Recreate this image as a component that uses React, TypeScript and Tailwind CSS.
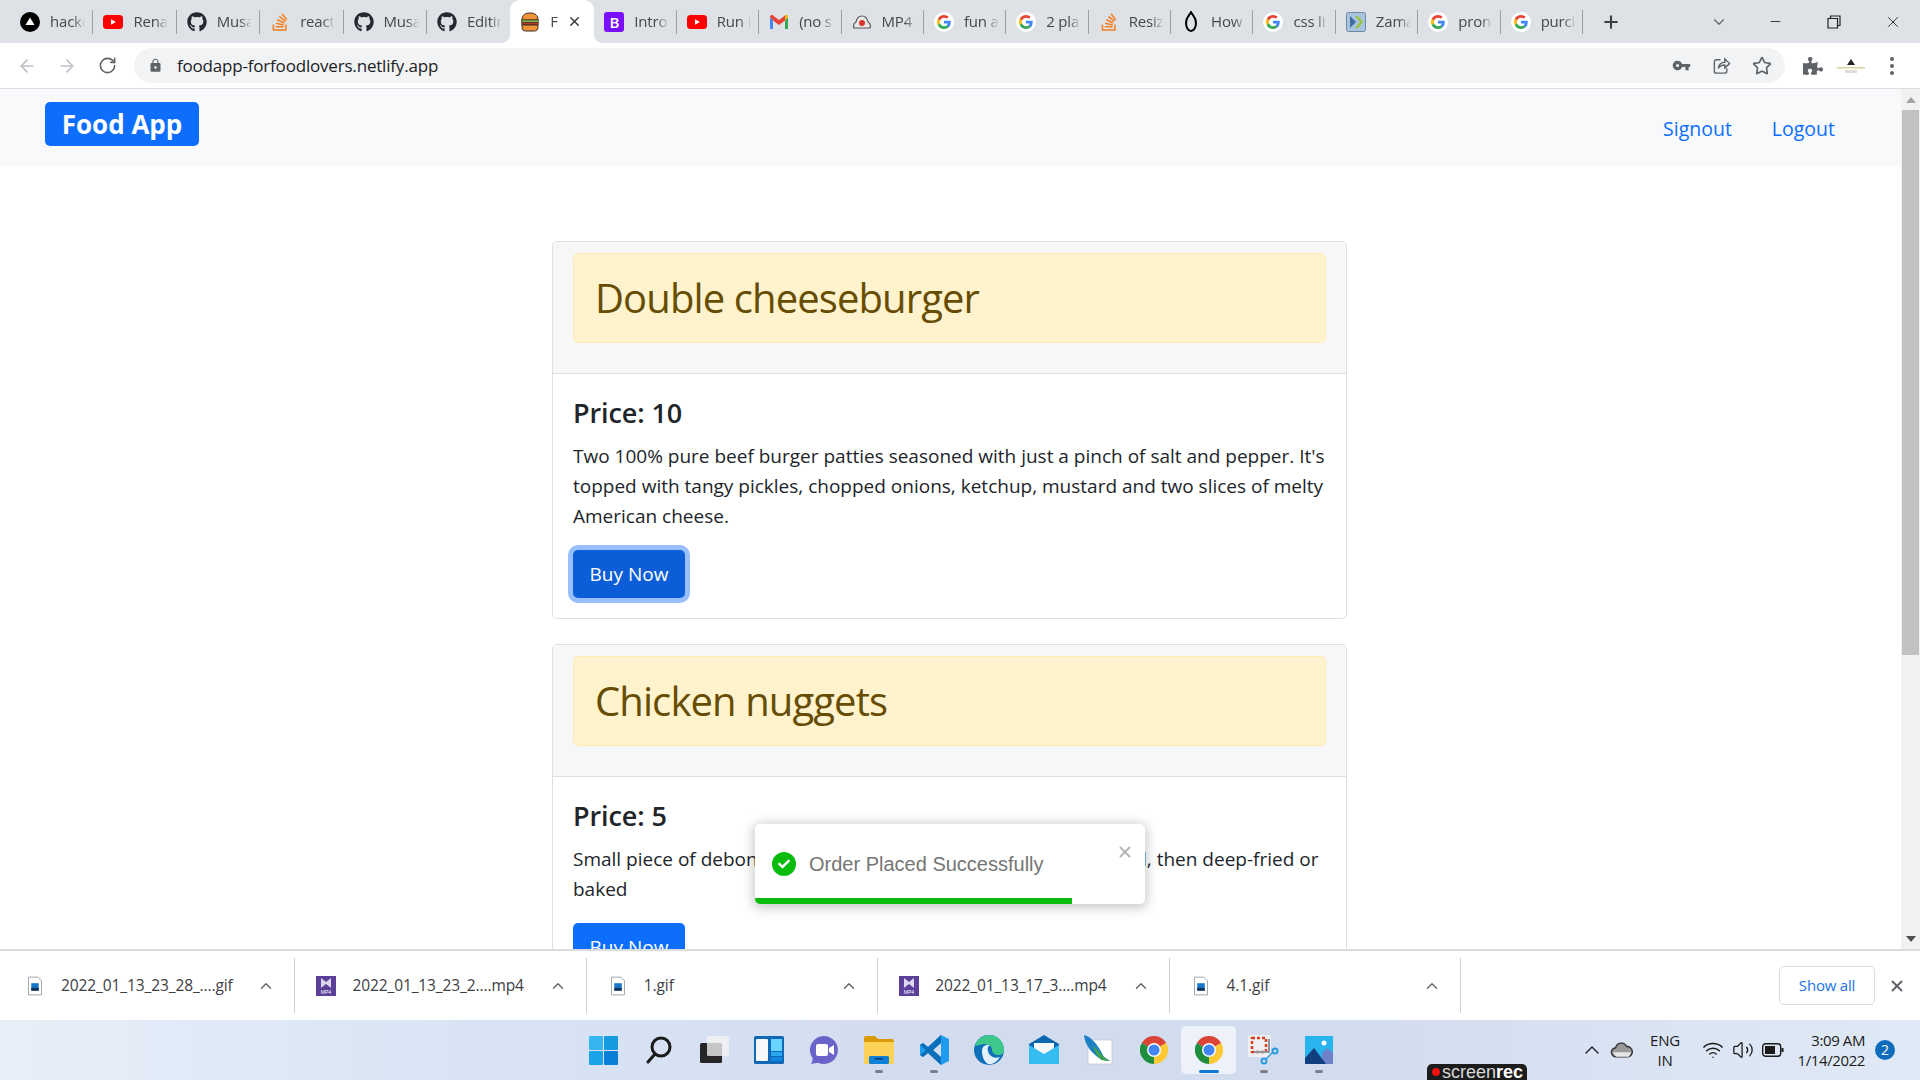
import { ArrowLeft, ArrowRight, ChevronDown, ChevronUp, Minus, Plus, RotateCw, Star, Volume2, Wifi, X } from "lucide-react";
import { FaCheck, FaGithub, FaPuzzlePiece, FaStackOverflow } from "react-icons/fa";
import { MdLock, MdVpnKey } from "react-icons/md";

function GoogleG() {
  return (
    <span className="w-5 h-5 rounded-full bg-white flex items-center justify-center">
      <svg viewBox="0 0 48 48" className="w-[14px] h-[14px]">
        <path fill="#EA4335" d="M24 9.5c3.54 0 6.71 1.22 9.21 3.6l6.85-6.85C35.9 2.38 30.47 0 24 0 14.62 0 6.51 5.38 2.56 13.22l7.98 6.19C12.43 13.72 17.74 9.5 24 9.5z" />
        <path fill="#4285F4" d="M46.98 24.55c0-1.57-.15-3.09-.38-4.55H24v9.02h12.94c-.58 2.96-2.26 5.48-4.78 7.18l7.73 6c4.51-4.18 7.09-10.36 7.09-17.65z" />
        <path fill="#FBBC05" d="M10.53 28.59c-.48-1.45-.76-2.99-.76-4.59s.27-3.14.76-4.59l-7.98-6.19C.92 16.46 0 20.12 0 24c0 3.88.92 7.54 2.56 10.78l7.97-6.19z" />
        <path fill="#34A853" d="M24 48c6.48 0 11.93-2.13 15.89-5.81l-7.73-6c-2.15 1.45-4.92 2.3-8.16 2.3-6.26 0-11.57-4.22-13.47-9.91l-7.98 6.19C6.51 42.62 14.62 48 24 48z" />
      </svg>
    </span>
  );
}

function Hacker() {
  return (
    <svg viewBox="0 0 20 20" className="w-5 h-5">
      <circle cx="10" cy="10" r="10" fill="#000" />
      <path d="M10 5.5 14.5 13h-9z" fill="#fff" />
    </svg>
  );
}

function Youtube() {
  return (
    <svg viewBox="0 0 20 20" className="w-5 h-5">
      <rect x="0" y="3" width="20" height="14" rx="3.5" fill="#f00" />
      <path d="M8 7.2 13 10l-5 2.8z" fill="#fff" />
    </svg>
  );
}

function Burger() {
  return (
    <svg viewBox="0 0 20 20" className="w-5 h-5">
      <path d="M2 8c0-5 3-7 8-7s8 2 8 7z" fill="#f0923a" stroke="#3a2a20" strokeWidth="1" />
      <rect x="1.5" y="8" width="17" height="2.5" fill="#7cb342" stroke="#3a2a20" strokeWidth=".6" />
      <rect x="1.5" y="10.5" width="17" height="2.5" rx="1" fill="#b3392c" stroke="#3a2a20" strokeWidth=".6" />
      <path d="M2 13h16v2.5c0 2-1.500 3.500-3.500 3.500h-9C3.500 19 2 17.500 2 15.500z" fill="#f0923a" stroke="#3a2a20" strokeWidth="1" />
    </svg>
  );
}

function Gmail() {
  return (
    <svg viewBox="0 0 20 20" className="w-5 h-5">
      <path d="M1 5v12h3V8.500z" fill="#4285f4" />
      <path d="M19 5v12h-3V8.500z" fill="#34a853" />
      <path d="M1 5c0-2 2-2.500 3-1.500L10 8l6-4.500c1-1 3-.5 3 1.500l-3 3.500-6 4.500-6-4.500z" fill="#ea4335" />
      <path d="M16 3.500c1-1 3-.5 3 1.500l-3 3.500z" fill="#fbbc04" />
    </svg>
  );
}

function CloudTab() {
  return (
    <svg viewBox="0 0 20 20" className="w-5 h-5">
      <path d="M2 16c-1-3 0-5 2-6 1-4 3-6 6-6s5 2 6 6c2 1 3 3 2 6z" fill="#e8e8e8" stroke="#555" strokeWidth="1.200" />
      <circle cx="10" cy="11" r="3" fill="#d9362b" />
    </svg>
  );
}

function Flame() {
  return (
    <svg viewBox="0 0 20 22" className="w-5 h-[22px]">
      <path d="M10 1c1 3 5 5 5 11 0 4-2 8-5 8s-5-4-5-8c0-6 4-8 5-11z" fill="none" stroke="#000" strokeWidth="2" />
    </svg>
  );
}

function Zamzar() {
  return (
    <svg viewBox="0 0 20 20" className="w-5 h-5">
      <rect x=".5" y=".5" width="19" height="19" rx="2" fill="#a9c4dd" stroke="#6a8aa8" />
      <path d="M4 4l6 6-6 6z" fill="#3f6ea5" />
      <path d="M9 4h3l5 6-5 6H9l5-6z" fill="#9bc53d" />
    </svg>
  );
}

function Bootstrap() {
  return <span className="w-5 h-5 rounded-[3px] bg-[#7a10f7] text-white text-[15px] leading-5 text-center font-semibold">B</span>;
}

function GifFile() {
  return (
    <svg viewBox="0 0 15 20" className="w-[14px] h-5">
      <path d="M.5.5h10l4 4v15H.5z" fill="#fff" stroke="#9aa0a6" />
      <rect x="3.500" y="7" width="8" height="8" fill="#1877c9" />
      <rect x="3.500" y="12" width="8" height="3" fill="#12315a" />
    </svg>
  );
}

function Mp4File() {
  return (
    <svg viewBox="0 0 20 20" className="w-5 h-5">
      <rect width="20" height="20" fill="#5b3f99" />
      <path d="M5 2l5 4 5-4v10l-5-4-5 4z" fill="#ddd6ee" />
      <text x="10" y="18" fontSize="5" fill="#fff" textAnchor="middle" fontFamily="Liberation Sans">MP4</text>
    </svg>
  );
}

function Chrome({ size = "w-7 h-7" }: { size?: string }) {
  return (
    <svg viewBox="0 0 48 48" className={size}>
      <path d="M24 24 3.200 12A24 24 0 0 1 44.800 12z" fill="#db4437" />
      <path d="M24 24 44.800 12A24 24 0 0 1 24 48z" fill="#fcc934" />
      <path d="M24 24V48A24 24 0 0 1 3.200 12z" fill="#1e8e3e" />
      <circle cx="24" cy="24" r="12" fill="#fff" />
      <circle cx="24" cy="24" r="9.500" fill="#4285f4" />
    </svg>
  );
}

const tabs: { icon: React.ReactNode; text: string }[] = [
  { icon: <Hacker />, text: "hacke" },
  { icon: <Youtube />, text: "Rena" },
  { icon: <FaGithub className="w-5 h-5 text-[#24292f]" />, text: "Musa" },
  { icon: <FaStackOverflow className="w-5 h-5 text-[#f48024]" />, text: "react" },
  { icon: <FaGithub className="w-5 h-5 text-[#24292f]" />, text: "Musa" },
  { icon: <FaGithub className="w-5 h-5 text-[#24292f]" />, text: "Editin" },
  { icon: <Burger />, text: "F" },
  { icon: <Bootstrap />, text: "Intro" },
  { icon: <Youtube />, text: "Run I" },
  { icon: <Gmail />, text: "(no s" },
  { icon: <CloudTab />, text: "MP4" },
  { icon: <GoogleG />, text: "fun a" },
  { icon: <GoogleG />, text: "2 pla" },
  { icon: <FaStackOverflow className="w-5 h-5 text-[#f48024]" />, text: "Resiz" },
  { icon: <Flame />, text: "How" },
  { icon: <GoogleG />, text: "css li" },
  { icon: <Zamzar />, text: "Zama" },
  { icon: <GoogleG />, text: "pron" },
  { icon: <GoogleG />, text: "purcl" },
];

function TabStrip() {
  return (
    <div className="h-[43px] bg-[#dee1e6] flex items-center pl-[10px] shrink-0 text-[#45484d]">
      {tabs.map((t, i) => {
        const active = i === 6;
        const width = active ? "w-[84px] bg-white rounded-t-[10px]" : i < 6 ? "w-[83.4px]" : "w-[82.4px]";
        return (
          <div key={i} className={"relative h-[43px] flex items-center pl-[10px] gap-[10px] shrink-0 " + width}>
            <span className="w-5 h-5 flex items-center justify-center shrink-0">{t.icon}</span>
            <span className={"overflow-hidden whitespace-nowrap text-[15px] tracking-[-0.2px] [mask-image:linear-gradient(to_right,black_65%,transparent)] " + (active ? "w-[10px]" : "w-[35px]")}>{t.text}</span>
            {active && <X className="w-[15px] h-[15px] text-[#3c4043] absolute right-[12px]" strokeWidth={2.5} />}
            {active && <span className="absolute -left-2 bottom-0 w-2 h-2 bg-[radial-gradient(circle_at_0_0,transparent_7.500px,white_8px)]" />}
            {active && <span className="absolute -right-2 bottom-0 w-2 h-2 bg-[radial-gradient(circle_at_100%_0,transparent_7.500px,white_8px)]" />}
            {!active && i !== 5 && <span className="absolute right-0 top-[10px] h-[24px] w-px bg-[#9aa0a6]" />}
          </div>
        );
      })}
      <Plus className="w-5 h-5 text-[#3c4043] ml-[18px]" strokeWidth={2.5} />
      <ChevronDown className="w-[18px] h-[18px] text-[#5f6368] ml-[89px]" strokeWidth={1.5} />
      <Minus className="w-[15px] h-[15px] text-[#333] ml-[40px]" strokeWidth={1.500} />
      <svg viewBox="0 0 14 14" className="w-[14px] h-[14px] ml-[44px]">
        <path d="M1 3.500h9.500V13H1zM3.500 3.500V1H13v9.500h-2.500" fill="none" stroke="#222" strokeWidth="1.200" />
      </svg>
      <X className="w-[18px] h-[18px] text-[#333] ml-[43px]" strokeWidth={1.300} />
    </div>
  );
}

function Toolbar() {
  return (
    <div className="h-[46px] bg-white border-b border-[#dadce0] flex items-center shrink-0">
      <ArrowLeft className="w-[20px] h-[20px] text-[#bdc1c6] ml-[17px]" />
      <ArrowRight className="w-[20px] h-[20px] text-[#bdc1c6] ml-[20px]" />
      <RotateCw className="w-[19px] h-[19px] text-[#5f6368] ml-[21px]" />
      <div className="ml-[17px] w-[1651px] h-[35px] bg-[#f1f3f4] rounded-full flex items-center">
        <MdLock className="w-[15px] h-[15px] text-[#5f6368] ml-[14px]" />
        <span className="ml-[14px] text-[17px] text-[#202124] tracking-[-0.19px]">foodapp-forfoodlovers.netlify.app</span>
        <MdVpnKey className="w-[19px] h-[19px] text-[#5f6368] ml-auto" />
        <svg viewBox="0 0 20 20" className="w-[19px] h-[19px] ml-[21px]" fill="none" stroke="#5f6368" strokeWidth="1.500">
          <path d="M9 4H4.500A2 2 0 0 0 2.500 6v10a2 2 0 0 0 2 2h9a2 2 0 0 0 2-2v-3" />
          <path d="M6.500 13c.5-4 3.500-6.500 7-6.500V3l5 5-5 4.500V9.500c-3 0-5.500 1-7 3.500z" />
        </svg>
        <Star className="w-[20px] h-[20px] text-[#5f6368] ml-[21px] mr-[13px]" strokeWidth={2} />
      </div>
      <FaPuzzlePiece className="w-[20px] h-[20px] text-[#5f6368] ml-[18px]" />
      <svg viewBox="0 0 28 20" className="w-[28px] h-5 ml-[14px]">
        <path d="M14 3l4 6h-8z" fill="#222" />
        <rect x="0" y="11" width="28" height="1.500" fill="#d8d59c" />
        <rect x="8" y="14" width="12" height="3" fill="#ddd" />
      </svg>
      <span className="ml-[25px] flex flex-col gap-[3px]">
        <span className="w-[4px] h-[4px] rounded-full bg-[#5f6368]" />
        <span className="w-[4px] h-[4px] rounded-full bg-[#5f6368]" />
        <span className="w-[4px] h-[4px] rounded-full bg-[#5f6368]" />
      </span>
    </div>
  );
}

function FoodCard({ title, price, text, focused }: { title: string; price: string; text: string; focused?: boolean }) {
  return (
    <div className="border border-[#dfdfdf] rounded-[5px] mb-[25px]">
      <div className="bg-[#f7f7f7] border-b border-[#dfdfdf] px-[20px] pt-[11px] pb-[30px] rounded-t-[5px]">
        <div className="h-[90px] bg-[#fff3cd] border border-[#ffecb5] rounded-[5px] text-[#664d03] flex items-center pl-[21px] text-[40px] font-medium tracking-[-0.9px]">{title}</div>
      </div>
      <div className="px-[20px] pt-[24px] pb-[20px] text-[#212529]">
        <div className="h-[30px] leading-[30px] text-[27px] font-semibold tracking-[-0.1px] mb-[13px]">{price}</div>
        <p className="text-[19px] leading-[30px]">{text}</p>
        <button className={"mt-[19px] w-[112px] h-[48px] rounded-[5px] text-white text-[19px] " + (focused ? "bg-[#0b5ed7] shadow-[0_0_0_5px_#98bffe]" : "bg-[#0d6efd]")}>Buy Now</button>
      </div>
    </div>
  );
}

function Page() {
  return (
    <div className="relative flex-1 min-h-0 flex bg-white">
      <div className="flex-1 overflow-hidden">
        <nav className="h-[77px] bg-[#f8f9fa] flex items-start">
          <div className="ml-[45px] mt-[13px] w-[154px] h-[44px] bg-[#0d6efd] rounded-[5px] text-white text-[26px] font-bold flex items-center justify-center">Food App</div>
          <a className="ml-auto mt-[25px] text-[19.500px] leading-[30px] text-[#0d6efd]">Signout</a>
          <a className="ml-[40px] mr-[66px] mt-[25px] text-[19.500px] leading-[30px] text-[#0d6efd]">Logout</a>
        </nav>
        <div className="w-[795px] ml-[552px] mt-[75px]">
          <FoodCard
            focused
            title="Double cheeseburger"
            price="Price: 10"
            text="Two 100% pure beef burger patties seasoned with just a pinch of salt and pepper. It's topped with tangy pickles, chopped onions, ketchup, mustard and two slices of melty American cheese."
          />
          <FoodCard
            title="Chicken nuggets"
            price="Price: 5"
            text="Small piece of deboned chicken meat that is breaded or battered, then deep-fried or baked"
          />
        </div>
      </div>
      <div className="w-[19px] bg-[#f1f1f1] flex flex-col items-center shrink-0">
        <div className="h-[21px] flex items-center"><span className="border-x-[5px] border-x-transparent border-b-[6px] border-b-[#a3a3a3]" /></div>
        <div className="w-[17px] h-[545px] bg-[#c1c1c1]" />
        <div className="mt-auto h-[21px] flex items-center"><span className="border-x-[5px] border-x-transparent border-t-[6px] border-t-[#505050]" /></div>
      </div>
      <div className="absolute left-[755px] top-[735px] w-[390px] h-[80px] bg-white rounded-[5px] shadow-[0_2px_12px_2px_rgba(0,0,0,0.22)] overflow-hidden">
        <div className="flex items-center h-[80px] pl-[17px]">
          <span className="w-6 h-6 rounded-full bg-[#07bc0c] flex items-center justify-center">
            <FaCheck className="w-[12px] h-[12px] text-white" />
          </span>
          <span className="ml-[13px] text-[20px] text-[#757575] font-['Liberation_Sans',sans-serif]">Order Placed Successfully</span>
        </div>
        <X className="absolute right-[11px] top-[19px] w-[18px] h-[18px] text-[#b4b4b4]" strokeWidth={2.5} />
        <div className="absolute left-0 bottom-0 h-[6px] w-[317px] bg-[#07bc0c]" />
      </div>
    </div>
  );
}

function DownloadItem({ name, kind }: { name: string; kind: "gif" | "mp4" }) {
  return (
    <div className="w-[291.400px] h-[55px] border-r border-[#cfcfcf] flex items-center pl-[21px] shrink-0">
      <span className="w-5 flex justify-center shrink-0">{kind === "gif" ? <GifFile /> : <Mp4File />}</span>
      <span className="ml-[16px] text-[15.500px] text-[#3c4043] tracking-[-0.1px] whitespace-nowrap">{name}</span>
      <ChevronUp className="ml-auto mr-[19px] w-[18px] h-[18px] text-[#5f6368]" strokeWidth={1.800} />
    </div>
  );
}

function DownloadBar() {
  return (
    <div className="h-[71px] bg-white border-t-2 border-[#dadce0] flex items-center pl-[4px] shrink-0">
      <DownloadItem kind="gif" name="2022_01_13_23_28_....gif" />
      <DownloadItem kind="mp4" name="2022_01_13_23_2....mp4" />
      <DownloadItem kind="gif" name="1.gif" />
      <DownloadItem kind="mp4" name="2022_01_13_17_3....mp4" />
      <DownloadItem kind="gif" name="4.1.gif" />
      <button className="ml-auto w-[96px] h-[39px] border border-[#dadce0] rounded-[5px] text-[15px] text-[#1a73e8] tracking-[-0.2px]">Show all</button>
      <X className="ml-[13px] mr-[14px] w-[18px] h-[18px] text-[#5f6368]" strokeWidth={2.5} />
    </div>
  );
}

function TaskIcon({ children, dot, active }: { children: React.ReactNode; dot?: boolean; active?: boolean }) {
  return (
    <div className={"relative w-[55px] h-[48px] flex items-center justify-center rounded-[5px] " + (active ? "bg-[#edf1fa]" : "")}>
      {children}
      {dot && <span className="absolute bottom-[1px] w-[8px] h-[3px] rounded-full bg-[#7a7f8a]" />}
      {active && <span className="absolute bottom-[1px] w-[20px] h-[3px] rounded-full bg-[#0f78d4]" />}
    </div>
  );
}

function Taskbar() {
  return (
    <div className="relative h-[60px] bg-[linear-gradient(90deg,#e7eff8_0%,#d8e4f5_25%,#d3dcef_50%,#d2dcef_70%,#e0eaf6_100%)] flex items-center shrink-0 pl-[576px]">
      <TaskIcon>
        <svg viewBox="0 0 29 29" className="w-[29px] h-[29px]">
          <rect width="14" height="14" rx="1" fill="#35b6f0" />
          <rect x="15" width="14" height="14" rx="1" fill="#169be0" />
          <rect y="15" width="14" height="14" rx="1" fill="#1aa3e8" />
          <rect x="15" y="15" width="14" height="14" rx="1" fill="#0a7fd6" />
        </svg>
      </TaskIcon>
      <TaskIcon>
        <svg viewBox="0 0 28 28" className="w-[28px] h-[28px]" fill="none" stroke="#1a1a1a" strokeWidth="3">
          <circle cx="16" cy="11" r="9" />
          <path d="M10 18 3 26" strokeLinecap="round" />
        </svg>
      </TaskIcon>
      <TaskIcon>
        <svg viewBox="0 0 30 30" className="w-[30px] h-[30px]">
          <rect x="1" y="8" width="22" height="20" rx="1.500" fill="#262626" />
          <rect x="8" y="1" width="22" height="20" rx="1.500" fill="#f4f4f4" fillOpacity=".78" />
        </svg>
      </TaskIcon>
      <TaskIcon>
        <svg viewBox="0 0 30 28" className="w-[30px] h-[28px]">
          <rect width="30" height="28" rx="1.500" fill="#1168b5" />
          <rect x="2" y="3" width="12" height="22" rx="1" fill="#f5f7fa" />
          <rect x="17" y="3" width="11" height="12" fill="#67d4fb" />
          <rect x="17" y="16" width="11" height="4" fill="#2aa6ee" />
          <rect x="17" y="21" width="11" height="4" fill="#0f86e0" />
        </svg>
      </TaskIcon>
      <TaskIcon>
        <svg viewBox="0 0 30 30" className="w-[30px] h-[30px]">
          <path d="M15 1a14 14 0 1 1-6 26.700L2 29c1-2 2-4 1.500-6A14 14 0 0 1 15 1z" fill="#6a63c9" />
          <rect x="7" y="9" width="12" height="12" rx="2" fill="#fff" />
          <path d="M20 13l5-3v10l-5-3z" fill="#fff" />
        </svg>
      </TaskIcon>
      <TaskIcon dot>
        <svg viewBox="0 0 30 28" className="w-[30px] h-[28px]">
          <path d="M0 2a2 2 0 0 1 2-2h9l3 3h14a2 2 0 0 1 2 2v3H0z" fill="#d99a06" />
          <path d="M0 6h30v22H0z" fill="#fcd256" />
          <rect x="5" y="20" width="20" height="8" rx="1.500" fill="#0f80d7" />
          <rect x="11" y="22" width="8" height="1.500" fill="#003b6f" />
        </svg>
      </TaskIcon>
      <TaskIcon dot>
        <svg viewBox="0 0 30 30" className="w-[30px] h-[30px]">
          <path d="M22 0 30 4v22l-8 4-13-12-5 4-3-2V10l3-2 5 4zM22 8l-8 7 8 7z" fill="#1f9cf0" fillRule="evenodd" />
          <path d="M22 0 9 12l-5-4-3 2 6 5-6 5 3 2 5-4 13 12-.1-8L14 15l8-7z" fill="#0a6fb8" />
        </svg>
      </TaskIcon>
      <TaskIcon>
        <svg viewBox="0 0 30 30" className="w-[30px] h-[30px]">
          <circle cx="15" cy="15" r="15" fill="#0f6fb8" />
          <path d="M1 11C3 4 9 0 15 0c8 0 15 6 15 15 0 3-2 5-5 5-4 0-7-2-7-5 0-2-1-6-7-6-5 0-8 2-10 2z" fill="#3ec78a" />
          <path d="M8 16c0-5 4-7 8-6-2 1-3 3-2 6 1 5 6 8 12 6-3 5-8 8-12 7-4-2-6-8-6-13z" fill="#e3f1fb" />
        </svg>
      </TaskIcon>
      <TaskIcon>
        <svg viewBox="0 0 30 30" className="w-[30px] h-[30px]">
          <path d="M15 0 30 9v20H0V9z" fill="#0b68b0" />
          <path d="M5 8h20v9l-10 5-10-5z" fill="#f4f8fb" />
          <path d="M0 10l15 9 15-9v19H0z" fill="#35bdf2" />
        </svg>
      </TaskIcon>
      <TaskIcon>
        <svg viewBox="0 0 30 30" className="w-[30px] h-[30px]">
          <rect x="4" y="5" width="24" height="24" fill="#fff" stroke="#c4c8ce" strokeWidth=".8" />
          <path d="M0 0c8 2 14 10 20 22l6 4-8-1C10 20 1 12 0 0z" fill="#1f7fc4" />
          <path d="M9 11c4 3 8 8 11 11l6 4-8-1c-4-2-7-8-9-14z" fill="#3fa34d" />
        </svg>
      </TaskIcon>
      <TaskIcon><Chrome /></TaskIcon>
      <TaskIcon active><Chrome /></TaskIcon>
      <TaskIcon dot>
        <svg viewBox="0 0 32 30" className="w-[32px] h-[30px]">
          <rect width="23" height="22" rx="2" fill="#eef0f3" />
          <path d="M4 3h14v14H4z" fill="none" stroke="#d8401f" strokeWidth="2.500" strokeDasharray="3 2" />
          <path d="M6 17h15V4" fill="none" stroke="#8f959c" strokeWidth="2" />
          <circle cx="27" cy="16" r="2.500" fill="none" stroke="#2b9bdf" strokeWidth="2" />
          <circle cx="16" cy="26" r="2.500" fill="none" stroke="#2b9bdf" strokeWidth="2" />
          <path d="M25 17 18 24" stroke="#2b9bdf" strokeWidth="1.500" />
        </svg>
      </TaskIcon>
      <TaskIcon dot>
        <svg viewBox="0 0 28 28" className="w-[28px] h-[28px]">
          <rect width="28" height="28" rx="1" fill="#28b4ee" />
          <circle cx="19" cy="7" r="2.500" fill="#fff" />
          <path d="M17 17l5-5 6 5v11H17z" fill="#6f82c9" />
          <path d="M0 22 9 12l12 16H0z" fill="#123f80" />
        </svg>
      </TaskIcon>
      <div className="absolute left-[1427px] bottom-0 w-[100px] h-[16px] bg-[#1c1c1c] rounded-t-[5px] flex items-center pl-[5px] text-[18px] leading-[16px] text-[#d8d8d8] font-['Liberation_Sans',sans-serif]">
        <span className="w-[8px] h-[8px] rounded-full bg-[#f01010] mr-[2px] shrink-0" />
        <span>screen</span><span className="font-bold text-white">rec</span>
      </div>
      <div className="ml-auto flex items-center text-[#1b1b1b] pr-[25px]">
        <ChevronUp className="w-[30px] h-[24px]" strokeWidth={1.300} />
        <svg viewBox="0 0 20 14" className="w-[30px] h-[16px]">
          <path d="M5 13a4 4 0 0 1-.5-8A5 5 0 0 1 14 4a4.500 4.500 0 0 1 1 9z" fill="#9a9a9a" stroke="#333" strokeWidth="1.200" />
          <path d="M2 9h16l-2 4H5z" fill="#e6e6e6" />
        </svg>
        <div className="w-[56px] text-center text-[15px] leading-[20px] tracking-[-0.2px]"><div>ENG</div><div>IN</div></div>
        <Wifi className="ml-[9px] w-[22px] h-[22px]" strokeWidth={1.600} />
        <Volume2 className="ml-[8px] w-[22px] h-[22px]" strokeWidth={1.400} />
        <svg viewBox="0 0 22 14" className="ml-[8px] w-[22px] h-[14px]">
          <rect x=".7" y=".7" width="18" height="12.600" rx="3" fill="none" stroke="#1b1b1b" strokeWidth="1.400" />
          <rect x="3" y="3" width="10" height="8" fill="#1b1b1b" />
          <rect x="19.500" y="5" width="2" height="4" fill="#1b1b1b" />
        </svg>
        <div className="w-[81px] text-right text-[15px] leading-[20px] tracking-[-0.4px]"><div>3:09 AM</div><div>1/14/2022</div></div>
        <span className="ml-[10px] w-5 h-5 rounded-full bg-[#0f6cbd] text-white text-[14px] leading-5 text-center">2</span>
      </div>
    </div>
  );
}

export default function App() {
  return (
    <div className="h-screen w-full flex flex-col overflow-hidden bg-white font-['Open_Sans','Noto_Sans',sans-serif]">
      <TabStrip />
      <Toolbar />
      <Page />
      <DownloadBar />
      <Taskbar />
    </div>
  );
}
